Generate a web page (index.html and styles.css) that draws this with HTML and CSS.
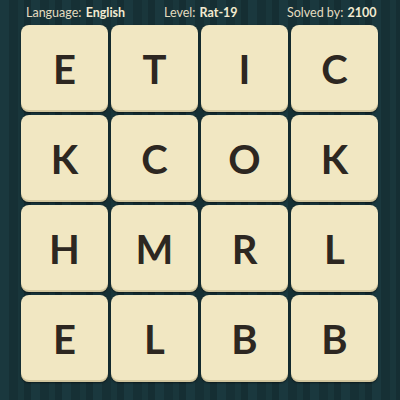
FILE: index.html
```html
<!DOCTYPE html>
<html>
<head>
<meta charset="utf-8">
<link rel="stylesheet" href="styles.css">
</head>
<body>
<div class="page">
  <div class="header">
    <span class="item item-lang">Language: <b>English</b></span>
    <span class="item item-level">Level: <b>Rat-19</b></span>
    <span class="item item-solved">Solved by: <b>2100</b></span>
  </div>
  <div class="grid">
    <div class="tile">E</div><div class="tile">T</div><div class="tile">I</div><div class="tile">C</div>
    <div class="tile">K</div><div class="tile">C</div><div class="tile">O</div><div class="tile">K</div>
    <div class="tile">H</div><div class="tile">M</div><div class="tile">R</div><div class="tile">L</div>
    <div class="tile">E</div><div class="tile">L</div><div class="tile">B</div><div class="tile">B</div>
  </div>
</div>
</body>
</html>
```
FILE: styles.css
```css
html, body {
  margin: 0;
  padding: 0;
}
body {
  width: 400px;
  height: 400px;
  overflow: hidden;
  background-color: #183439;
  background-image: repeating-linear-gradient(90deg,
    #1a383e 0px, #1a383e 9px,
    #163035 9px, #163035 18px,
    #19363b 18px, #19363b 24px,
    #152e33 24px, #152e33 31px);
  font-family: "Lato", "Open Sans", sans-serif;
}
.page {
  display: flex;
  flex-direction: column;
  padding: 0 0 0 21px;
}
.header {
  height: 25px;
  display: flex;
  align-items: center;
  color: #e3dcc0;
  font-size: 12.5px;
  padding-left: 5px;
}
.item {
  white-space: nowrap;
  flex: 0 0 auto;
}
.header b {
  font-weight: 700;
  color: #f1ead0;
  margin-left: 1px;
}
.item-lang { width: 138px; }
.item-level { width: 123px; }
.grid {
  display: grid;
  grid-template-columns: repeat(4, 87px);
  grid-template-rows: repeat(4, 87px);
  gap: 3px;
}
.tile {
  background: #f1e7c2;
  border-radius: 8px;
  box-shadow: inset 0 -2px 0 rgba(120, 100, 50, 0.25), 0 1px 2px rgba(0, 0, 0, 0.5);
  display: flex;
  align-items: center;
  justify-content: center;
  color: #2d2721;
  font-weight: 700;
  font-size: 40px;
  line-height: 1;
}
```
